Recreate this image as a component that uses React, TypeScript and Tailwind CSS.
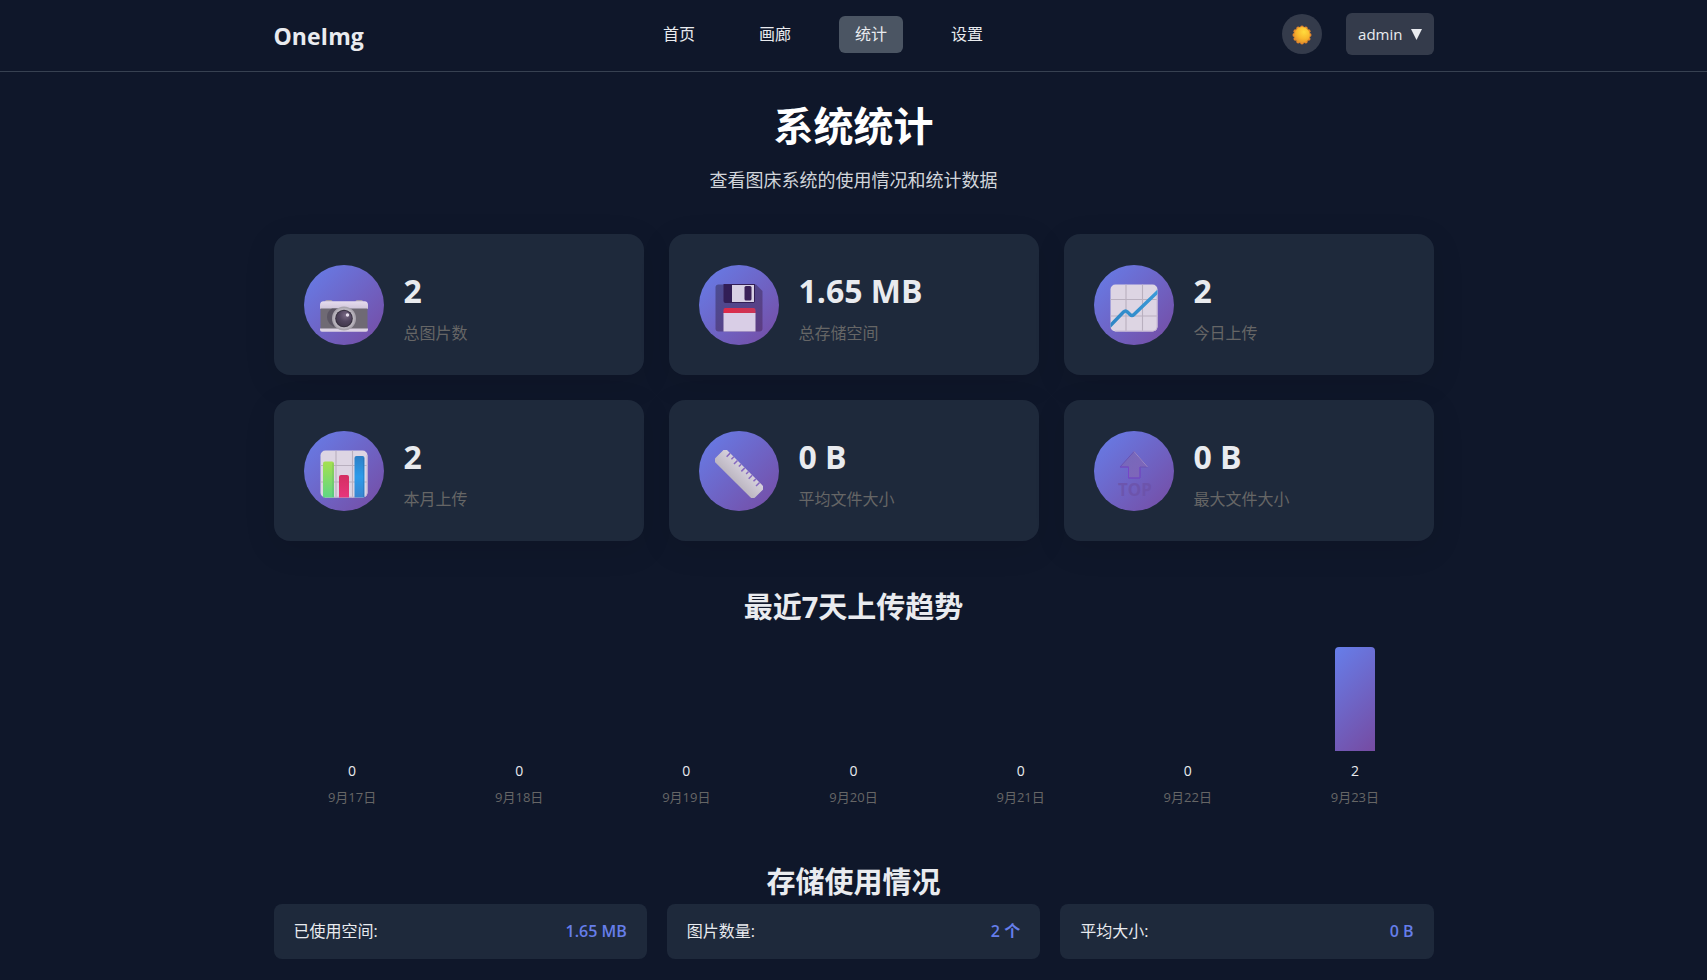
import React from "react";

const navItems = [
  { label: "首页", href: "#home" },
  { label: "画廊", href: "#gallery" },
  { label: "统计", href: "#stats", active: true },
  { label: "设置", href: "#settings" },
];

const days = [
  { date: "9月17日", count: 0 },
  { date: "9月18日", count: 0 },
  { date: "9月19日", count: 0 },
  { date: "9月20日", count: 0 },
  { date: "9月21日", count: 0 },
  { date: "9月22日", count: 0 },
  { date: "9月23日", count: 2 },
];

const storage = [
  { label: "已使用空间:", value: "1.65 MB" },
  { label: "图片数量:", value: "2 个" },
  { label: "平均大小:", value: "0 B" },
];

function SunIcon() {
  return (
    <svg viewBox="0 0 20 20" className="size-5" aria-hidden="true">
      <defs>
        <radialGradient id="sun" cx="0.62" cy="0.3" r="0.75">
          <stop offset="0" stopColor="#ffdc3d" />
          <stop offset="0.6" stopColor="#f9b62c" />
          <stop offset="1" stopColor="#e0902c" />
        </radialGradient>
      </defs>
      <g fill="#e5892b">
        <circle cx="10" cy="2.4" r="1.9" />
        <circle cx="13.8" cy="3.4" r="1.9" />
        <circle cx="16.6" cy="6.2" r="1.9" />
        <circle cx="17.6" cy="10" r="1.9" />
        <circle cx="16.6" cy="13.8" r="1.9" />
        <circle cx="13.8" cy="16.6" r="1.9" />
        <circle cx="10" cy="17.6" r="1.9" />
        <circle cx="6.2" cy="16.6" r="1.9" />
        <circle cx="3.4" cy="13.8" r="1.9" />
        <circle cx="2.4" cy="10" r="1.9" />
        <circle cx="3.4" cy="6.2" r="1.9" />
        <circle cx="6.2" cy="3.4" r="1.9" />
      </g>
      <circle cx="10" cy="10" r="7.9" fill="url(#sun)" />
    </svg>
  );
}

function CameraIcon() {
  return (
    <svg viewBox="0 0 48 48" className="size-12" aria-hidden="true">
      <defs>
        <linearGradient id="cam-top" x1="0" y1="0" x2="0" y2="1">
          <stop offset="0" stopColor="#e6dcee" />
          <stop offset="1" stopColor="#cfc5d9" />
        </linearGradient>
        <radialGradient id="cam-lens" cx="0.6" cy="0.3" r="0.8">
          <stop offset="0" stopColor="#7a6a85" />
          <stop offset="0.5" stopColor="#51455e" />
          <stop offset="1" stopColor="#3e3548" />
        </radialGradient>
      </defs>
      <path d="M5 17.500q0-1.500 1.500-1.500h4.500q1.500 0 1.500 1.500v1H5zM35.500 17.500q0-1.500 1.500-1.500h4.500q1.500 0 1.500 1.500v1h-7.500z" fill="#a89fb2" />
      <path d="M0 25v-4q0-3.800 3.500-3.800h41q3.500 0 3.500 3.800v4z" fill="url(#cam-top)" />
      <path d="M.5 24.500h47V45H.5z" fill="#6f6a74" />
      <path d="M7 33q0-6 5-8.500h9L14 43q-7-4-7-10z" fill="#5b5563" />
      <path d="M0 44.500h48v1.300q0 2-2 2H2q-2 0-2-2z" fill="#ddd4e4" />
      <circle cx="24" cy="34.500" r="12" fill="#a9a4ad" />
      <circle cx="24" cy="34.500" r="10.600" fill="#b9b4bd" />
      <circle cx="24" cy="34.500" r="8.800" fill="#37303f" />
      <circle cx="24" cy="34.500" r="7.800" fill="url(#cam-lens)" />
      <circle cx="27.500" cy="31" r="1.700" fill="#e8e0ee" />
    </svg>
  );
}

function FloppyIcon() {
  return (
    <svg viewBox="0 0 48 48" className="size-12" aria-hidden="true">
      <defs>
        <linearGradient id="disk-body" x1="0" y1="0" x2="1" y2="1">
          <stop offset="0" stopColor="#4b4c92" />
          <stop offset="1" stopColor="#5d3c82" />
        </linearGradient>
        <linearGradient id="disk-red" x1="0" y1="0" x2="1" y2="0">
          <stop offset="0" stopColor="#e02a48" />
          <stop offset="1" stopColor="#c93658" />
        </linearGradient>
      </defs>
      <path d="M3.500 .5H41L47.500 7v37.500q0 3-3 3h-41q-3 0-3-3v-41q0-3 3-3z" fill="url(#disk-body)" />
      <path d="M8.500 0H40v17q0 2-2 2H10.500q-2 0-2-2z" fill="#321e56" />
      <path d="M17 1h22v17H17z" fill="#d8d0e4" />
      <rect x="29.500" y="2" width="7" height="14.500" rx="1.500" fill="#3a2058" />
      <path d="M8.500 26q0-2 2-2H38.500q2 0 2 2v3.500h-32z" fill="url(#disk-red)" />
      <path d="M8.500 29h32v18.500h-32z" fill="#d9cee6" />
    </svg>
  );
}

// the two chart tiles share the same gridded sheet
function Sheet() {
  return (
    <>
      <rect x="0.500" y="0.500" width="47" height="47" rx="5" fill="#ddd5e3" />
      <path d="M16 .5v47M32.500 .5v47M.5 15.500h47M.5 32h47" stroke="#b9b0bf" strokeWidth="1.100" fill="none" />
      <path d="M47 5v38q0 4-4 4H5" stroke="#c8b9d4" strokeWidth="1" fill="none" />
    </>
  );
}

function TrendIcon() {
  return (
    <svg viewBox="0 0 48 48" className="size-12" aria-hidden="true">
      <defs>
        <linearGradient id="trend" x1="0" y1="1" x2="1" y2="0">
          <stop offset="0" stopColor="#2e86c4" />
          <stop offset="1" stopColor="#3a9ad9" />
        </linearGradient>
        <clipPath id="sheet-clip">
          <rect x="0.500" y="0.500" width="47" height="47" rx="5" />
        </clipPath>
      </defs>
      <Sheet />
      <path
        d="M-1 43L13.500 28q2-2 4 0l2.500 2.500q2 2 4 0L49 6.500"
        stroke="url(#trend)"
        strokeWidth="3.400"
        fill="none"
        clipPath="url(#sheet-clip)"
      />
    </svg>
  );
}

function BarsIcon() {
  return (
    <svg viewBox="0 0 48 48" className="size-12" aria-hidden="true">
      <defs>
        <linearGradient id="bar-green" x1="0" y1="0" x2="0" y2="1">
          <stop offset="0" stopColor="#a5e04f" />
          <stop offset="1" stopColor="#5fd684" />
        </linearGradient>
        <linearGradient id="bar-pink" x1="0" y1="0" x2="0" y2="1">
          <stop offset="0" stopColor="#d42e62" />
          <stop offset="1" stopColor="#e8357c" />
        </linearGradient>
        <linearGradient id="bar-blue" x1="0" y1="0" x2="0" y2="1">
          <stop offset="0" stopColor="#2c7fc6" />
          <stop offset="0.5" stopColor="#2d9bea" />
          <stop offset="1" stopColor="#3a85d0" />
        </linearGradient>
      </defs>
      <Sheet />
      <path d="M3 47.500V13.500q0-2 2-2h7q2 0 2 2v34z" fill="url(#bar-green)" />
      <path d="M19 47.500V27q0-2 2-2h6q2 0 2 2v20.500z" fill="url(#bar-pink)" />
      <path d="M34.500 47.500V8q0-2 2-2h6q2 0 2 2v39.500z" fill="url(#bar-blue)" />
      <path d="M13 13v34M43.500 8v39" stroke="#1d4c7c" strokeOpacity="0.200" strokeWidth="1" />
    </svg>
  );
}

function RulerIcon() {
  return (
    <svg viewBox="0 0 48 48" className="size-12" aria-hidden="true">
      <defs>
        <linearGradient id="ruler" x1="0" y1="0" x2="0" y2="1">
          <stop offset="0" stopColor="#d6d1dc" />
          <stop offset="1" stopColor="#bcb6c1" />
        </linearGradient>
      </defs>
      <g transform="rotate(45 24 24)">
        <rect x="-4" y="15.500" width="56" height="17" rx="3.500" fill="url(#ruler)" />
        <path
          d="M3 15.500v5M8.200 15.500v3.400M13.400 15.500v5M18.600 15.500v3.400M23.800 15.500v5M29 15.500v3.400M34.200 15.500v5M39.400 15.500v3.400M44.600 15.500v5"
          stroke="#8568c0"
          strokeWidth="1.500"
        />
      </g>
    </svg>
  );
}

function TopIcon() {
  return (
    <svg viewBox="0 0 48 48" className="size-12 overflow-visible" aria-hidden="true">
      <defs>
        <linearGradient id="top-arrow" x1="0" y1="0" x2="1" y2="1">
          <stop offset="0" stopColor="#7569bc" />
          <stop offset="1" stopColor="#8065b8" />
        </linearGradient>
      </defs>
      <path d="M24 1.500L37.500 17H30V28H18.500V17H10z" fill="url(#top-arrow)" stroke="#6650b0" strokeWidth="0.900" strokeLinejoin="round" />
      <path d="M24 1.500L37.500 17" stroke="#9a88c6" strokeWidth="1" />
      <path d="M10 17H18.500V28H30V17" stroke="#7546c8" strokeWidth="1" fill="none" />
      <text x="25" y="46" textAnchor="middle" fontSize="17" fontWeight="700" fill="#6c52a8" fillOpacity="0.800" fontFamily="Open Sans, sans-serif">
        TOP
      </text>
    </svg>
  );
}

const stats = [
  { value: "2", label: "总图片数", icon: <CameraIcon /> },
  { value: "1.65 MB", label: "总存储空间", icon: <FloppyIcon /> },
  { value: "2", label: "今日上传", icon: <TrendIcon /> },
  { value: "2", label: "本月上传", icon: <BarsIcon /> },
  { value: "0 B", label: "平均文件大小", icon: <RulerIcon /> },
  { value: "0 B", label: "最大文件大小", icon: <TopIcon /> },
];

function Header() {
  return (
    <header className="border-b border-[#374151]">
      <div className="mx-auto flex max-w-[1200px] items-center justify-between px-5 pt-[13px] pb-4">
        <a href="#home" className="pt-1 text-[23px] leading-8 font-bold">
          OneImg
        </a>
        <nav className="flex gap-8">
          {navItems.map((item) => (
            <a
              key={item.label}
              href={item.href}
              className={
                item.active
                  ? "rounded-md bg-[#4b5563] px-4 py-1.5 leading-[25px]"
                  : "rounded-md px-4 py-1.5 leading-[25px]"
              }
            >
              {item.label}
            </a>
          ))}
        </nav>
        <div className="flex items-center gap-6">
          <button
            type="button"
            aria-label="切换主题"
            className="flex size-10 items-center justify-center rounded-full bg-[#343b4b] pt-0.5"
          >
            <SunIcon />
          </button>
          <button
            type="button"
            className="flex items-center gap-2 rounded-md bg-[#343b4b] px-3 py-[9px] text-[15px] leading-6"
          >
            admin
            <svg viewBox="0 0 10 10" className="size-[11px]" aria-hidden="true">
              <path d="M0 0h10L5 10z" fill="currentColor" />
            </svg>
          </button>
        </div>
      </div>
    </header>
  );
}

export default function App() {
  const max = Math.max(...days.map((d) => d.count));

  return (
    <div className="min-h-screen bg-[#0f172a] font-['Open_Sans','Noto_Sans_CJK_SC',sans-serif] text-base text-[#e9ebef]">
      <Header />
      <main className="mx-auto max-w-[1200px] px-5 pt-6">
        <div className="mb-10 text-center">
          <h1 className="mb-2.5 text-[40px] leading-15 font-bold text-white">系统统计</h1>
          <p className="text-lg leading-7 text-[#d1d5db]">查看图床系统的使用情况和统计数据</p>
        </div>

        <section className="mb-11 grid grid-cols-3 gap-[25px]">
          {stats.map((s) => (
            <div
              key={s.label}
              className="flex items-center gap-5 rounded-2xl bg-[#1e293b] p-[30px] shadow-[0_8px_32px_rgba(0,0,0,0.1)]"
            >
              <div className="flex size-20 shrink-0 items-center justify-center rounded-full bg-[linear-gradient(135deg,#667eea_0%,#764ba2_100%)] pt-1.5">
                {s.icon}
              </div>
              <div>
                <div className="mb-[3px] text-[32px] leading-[54px] font-bold">{s.value}</div>
                <div className="leading-6 text-[#666666]">{s.label}</div>
              </div>
            </div>
          ))}
        </section>

        <section className="mb-[53px]">
          <h2 className="mb-[18px] text-center text-[29px] leading-11 font-bold">最近7天上传趋势</h2>
          <div className="flex gap-2.5">
            {days.map((d) => (
              <div key={d.date} className="flex flex-1 flex-col items-center">
                <div className="flex h-26 items-end">
                  <div
                    className="w-10 rounded-t bg-[linear-gradient(135deg,#667eea_0%,#764ba2_100%)]"
                    style={{ height: `${(d.count / max) * 100}%` }}
                  />
                </div>
                <div className="mt-2.5 text-sm leading-5">{d.count}</div>
                <div className="mt-1.5 text-[13px] leading-5 text-[#666666]">{d.date}</div>
              </div>
            ))}
          </div>
        </section>

        <section className="pb-4">
          <h2 className="text-center text-[29px] leading-11 font-bold">存储使用情况</h2>
          <div className="grid grid-cols-3 gap-5">
            {storage.map((s) => (
              <div
                key={s.label}
                className="flex items-center justify-between rounded-lg bg-[#1e293b] px-5 py-[15px] leading-[25px]"
              >
                <span>{s.label}</span>
                <span className="font-semibold text-[#667eea]">{s.value}</span>
              </div>
            ))}
          </div>
        </section>
      </main>
    </div>
  );
}
